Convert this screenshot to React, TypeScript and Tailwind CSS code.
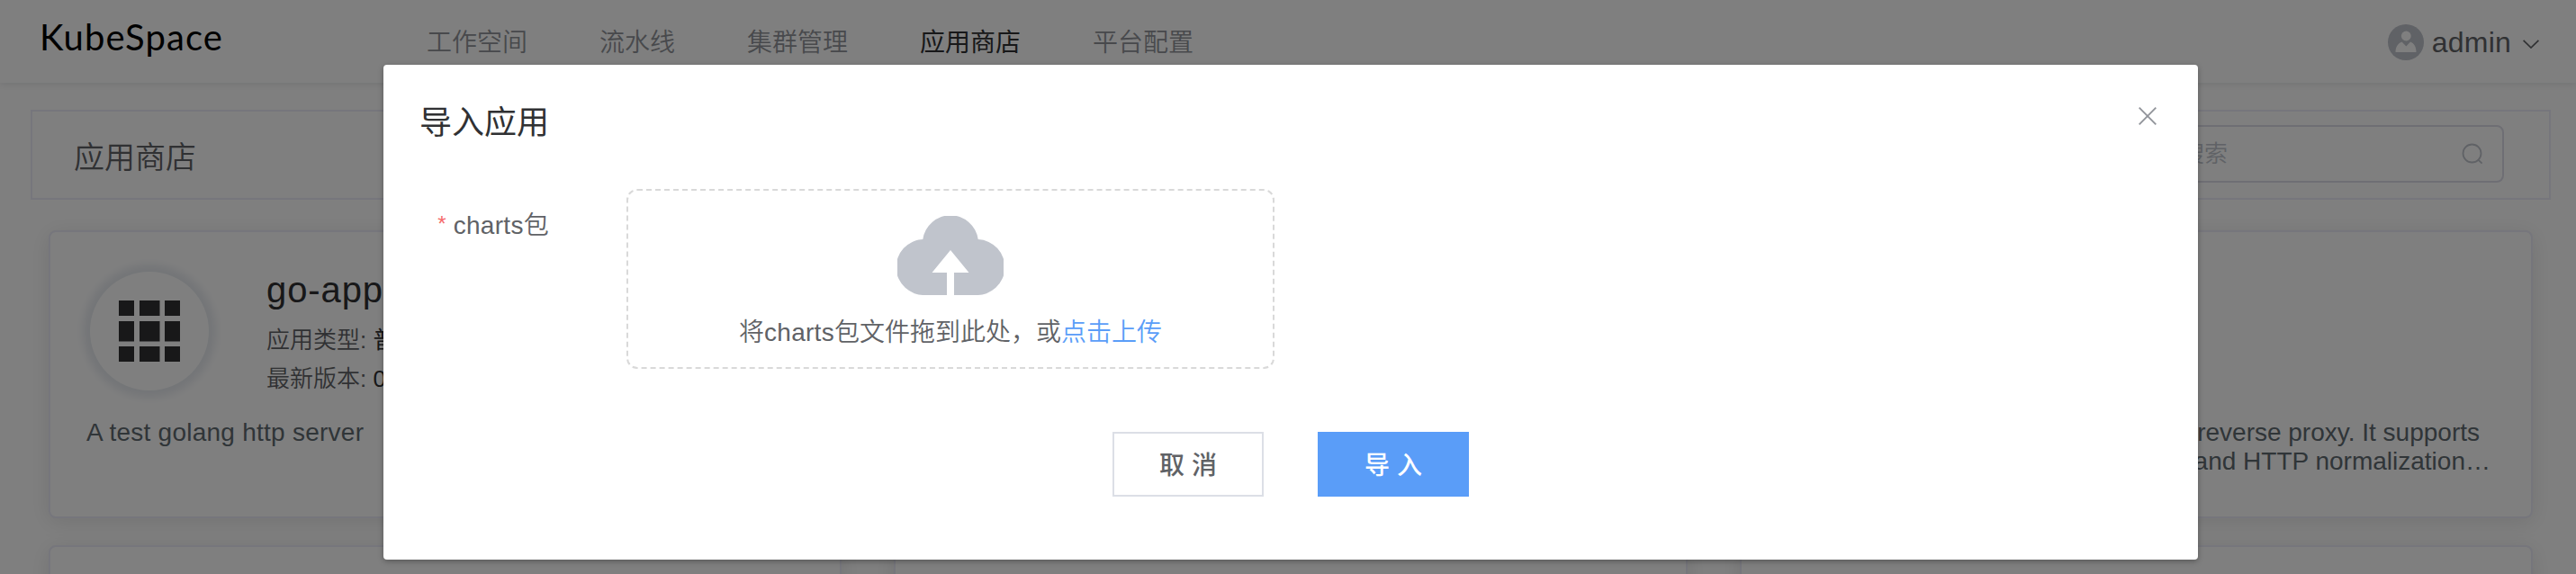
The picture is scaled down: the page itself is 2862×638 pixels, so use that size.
import React from "react";

const nav = ["工作空间", "流水线", "集群管理", "应用商店", "平台配置"];

function Card({ children }: { children?: React.ReactNode }) {
  return (
    <div className="h-80 min-w-0 flex-1 rounded-lg border-2 border-[#ececf8] bg-white shadow-[0_4px_24px_rgba(0,0,0,0.1)]">
      {children}
    </div>
  );
}

function GridIcon() {
  return (
    <svg viewBox="0 0 68 68" className="size-[68px]" fill="#303133">
      {[[0, 17], [23, 22.5], [51, 17]].map(([x, w]) =>
        [[0, 17], [23, 22.5], [51, 17]].map(([y, h]) => (
          <rect key={`${x}-${y}`} x={x} y={y} width={w} height={h} />
        )),
      )}
    </svg>
  );
}

export default function App() {
  return (
    <div className="relative h-[638px] w-[2862px] overflow-hidden bg-white font-['Liberation_Sans','Noto_Sans_CJK_SC',sans-serif] font-[350] text-[#606266]">
      <header className="flex h-[92px] items-center shadow-[0_2px_8px_rgba(0,21,41,0.1)]">
        <div className="w-[428px] pb-[10px] pl-[44px] font-['Lato',sans-serif] text-[40px] leading-[80px] font-normal tracking-[1.1px] text-black">
          KubeSpace
        </div>
        <nav className="ml-[46px] flex gap-20 pt-[3px] text-[28px] leading-[94px]">
          {nav.map((n) => (
            <span key={n} className={n === "应用商店" ? "font-normal text-[#303133]" : "text-[#909399]"}>{n}</span>
          ))}
        </nav>
        <div className="ml-auto flex items-center pt-[2px] pr-[41px]">
          <svg viewBox="0 0 40 40" className="size-10">
            <circle cx="20" cy="20" r="20" fill="#c0c4cc" />
            <circle cx="20.3" cy="13" r="5.4" fill="#fff" />
            <path d="M8.5 31 C8.5 25 11.5 21 15.5 19.5 L20.3 24.5 L25 19.5 C29 21 31.5 25 31.5 31Z" fill="#fff" />
          </svg>
          <span className="ml-[9px] text-[32px] leading-10 tracking-[0.2px] text-[#606266]">admin</span>
          <svg viewBox="0 0 18 10" className="mt-[3px] ml-[13px] h-[10px] w-[18px]" fill="none" stroke="#606266" strokeWidth="1.7">
            <path d="M0.6 0.8 L9 9 L17.4 0.8" />
          </svg>
        </div>
      </header>

      <main className="pt-[30px]">
        <section className="mr-7 ml-[34px] flex h-[100px] items-center justify-between border-2 border-[#ececf8] pr-[50px] pl-[46px]">
          <h1 className="pt-[5px] text-[34px] leading-none text-[#606266]">应用商店</h1>
          <div className="-mt-[2px] flex h-16 w-[480px] items-center justify-between rounded-lg border-2 border-[#dddde8] pr-[21px] pl-[119px]">
            <span className="text-[26px] text-[#c0c4cc]">搜索</span>
            <svg viewBox="0 0 24 24" className="size-6" fill="none" stroke="#c0c4cc" strokeWidth="1.8">
              <circle cx="11.5" cy="11.5" r="10" />
              <path d="M18.2 18.5 L22.6 22.6" />
            </svg>
          </div>
        </section>

        <div className="mt-[34px] mr-12 ml-[54px] flex gap-[58px]">
          <Card>
            <div className="flex pt-11 pl-11">
              <div className="flex size-[132px] shrink-0 items-center justify-center rounded-full shadow-[0_0_10px_8px_#e8ebf0]">
                <GridIcon />
              </div>
              <div className="ml-[64px] h-[132px] whitespace-nowrap text-[26px]">
                <div className="text-[40px] leading-10 tracking-[0.9px] text-[#303133]">go-app</div>
                <div className="mt-[15px] leading-[43px]">应用类型: <span className="font-normal text-[#303133]">普通应用</span></div>
                <div className="leading-[43px]">最新版本: <span className="text-[#303133]">0.1.0</span></div>
              </div>
            </div>
            <p className="mt-[31px] pl-10 text-[28px] leading-8 tracking-[0.25px] text-[#606a70]">A test golang http server</p>
          </Card>
          <Card />
          <Card>
            <p className="mt-[207px] mr-11 text-right text-[28px] leading-8 text-[#606a70]">
              <span className="mr-[13px] block">An ingress controller with reverse proxy. It supports</span>
              <span className="mr-px block">and HTTP normalization…</span>
            </p>
          </Card>
        </div>
        <div className="mt-[30px] mr-12 ml-[54px] flex gap-[58px]">
          <Card />
          <Card />
          <Card />
        </div>
      </main>

      <div className="absolute inset-0 bg-black/50 pt-[72px] pl-[426px]">
        <div role="dialog" className="flex h-[550px] w-[2016px] flex-col rounded-[4px] bg-white shadow-[0_2px_6px_rgba(0,0,0,0.3)]">
          <div className="flex h-[138px] justify-between pt-[45px] pr-[46px] pl-10">
            <h2 className="text-[36px] leading-[40px] font-normal text-[#303133]">导入应用</h2>
            <svg viewBox="0 0 20 20" className="mt-[2px] size-5" stroke="#909399" strokeWidth="1.8">
              <path d="M0.7 0.7 L19.3 19.3 M19.3 0.7 L0.7 19.3" />
            </svg>
          </div>
          <div className="flex">
            <label className="flex w-[184px] justify-end pt-[21px] text-[28px] leading-10">
              <span className="-mt-[2px] mr-2 text-[24px] text-[#f56c6c]">*</span>
              <span className="tracking-[0.3px]">charts包</span>
            </label>
            <div className="ml-[86px] flex h-[200px] w-[720px] flex-col items-center rounded-xl border-2 border-dashed border-[#d9d9d9]">
              <svg viewBox="0 0 118 88" className="mt-7 h-[88px] w-[118px]" fill="#c0c4cc">
                <path d="M28.3 26 A31 31 0 0 1 89.7 26 A31 31 0 0 1 87 88 H63 V63 H79.5 L59 38 L38.5 63 H55 V88 H31 A31 31 0 0 1 28.3 26Z" />
              </svg>
              <div className="mt-[22px] text-[28px] leading-10">
                将<span className="tracking-[0.3px]">charts</span>包文件拖到此处，或<span className="text-[#5a9df8]">点击上传</span>
              </div>
            </div>
          </div>
          <div className="mt-[70px] flex justify-center gap-[60px] text-[28px] font-medium">
            <button className="h-[72px] w-[168px] border-2 border-[#dcdfe6] pt-[3px]">取 消</button>
            <button className="h-[72px] w-[168px] bg-[#5a9df8] pt-[3px] text-white">导 入</button>
          </div>
        </div>
      </div>
    </div>
  );
}
